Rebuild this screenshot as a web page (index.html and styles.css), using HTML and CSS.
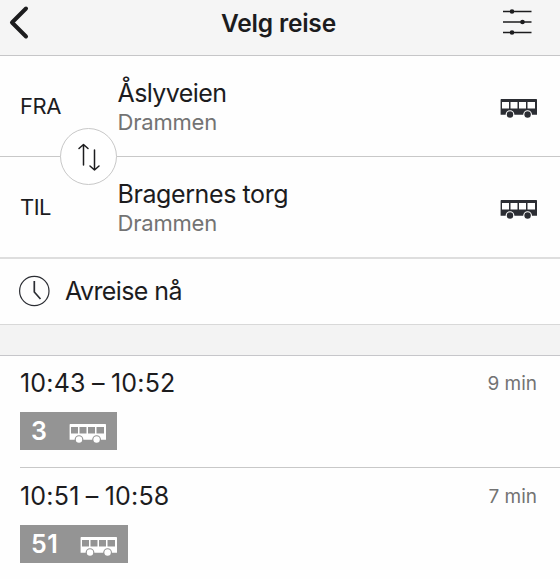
FILE: index.html
```html
<!DOCTYPE html>
<html lang="no">
<head>
    <meta charset="UTF-8">
    <meta name="viewport" content="width=device-width, initial-scale=1.0">
    <title>Velg reise</title>
    <link rel="stylesheet" href="styles.css">
</head>
<body>
    <svg class="sprite" width="0" height="0">
        <symbol id="bus" viewBox="0 0 37 20">
            <path fill="currentColor" fill-rule="evenodd" d="M1.300 0h35q.7 0 .7.8V15.700H32A4.400 4.400 0 0 0 23.200 15.700H14.400A4.400 4.400 0 0 0 5.600 15.700H.6V.8Q.6 0 1.300 0zM2 3v6.500h7V3zM10.500 3v6.500h7V3zM19 3v6.500h7V3zM27.500 3v6.500h7.500V3z"/>
            <circle fill="currentColor" cx="10" cy="15.500" r="3.200"/>
            <circle fill="currentColor" cx="27.600" cy="15.500" r="3.200"/>
        </symbol>
    </svg>

    <header class="topbar">
        <svg class="back" width="24" height="36" viewBox="0 0 24 36">
            <path d="M17 3.500L3 17.500L17 31.500" fill="none" stroke="#1c1c1e" stroke-width="4" stroke-linecap="round" stroke-linejoin="round"/>
        </svg>
        <h1>Velg reise</h1>
        <svg class="filter" width="30" height="28" viewBox="0 0 30 28" fill="#1c1c1e">
            <path d="M1 3.500h28.500M1 14h28.500M1 24.500h28.500" stroke="#1c1c1e" stroke-width="1.300"/>
            <circle cx="10" cy="3.500" r="2.300"/>
            <circle cx="20.500" cy="14" r="2.300"/>
            <circle cx="10" cy="24.500" r="2.300"/>
        </svg>
    </header>

    <section class="search">
        <div class="stop from">
            <span class="label">FRA</span>
            <div class="place">
                <div class="name">Åslyveien</div>
                <div class="city">Drammen</div>
            </div>
            <svg class="bus" width="37" height="20"><use href="#bus"/></svg>
        </div>
        <button class="swap">
            <svg width="24" height="30" viewBox="0 0 24 30" fill="none" stroke="#1c1c1e" stroke-width="1.500" stroke-linecap="round" stroke-linejoin="round">
                <path d="M6.500 23V2.500M2 6.500L6.500 2.500L11 6.500M17.500 8V28M13 24L17.500 28L22 24"/>
            </svg>
        </button>
        <div class="stop to">
            <span class="label">TIL</span>
            <div class="place">
                <div class="name">Bragernes torg</div>
                <div class="city">Drammen</div>
            </div>
            <svg class="bus" width="37" height="20"><use href="#bus"/></svg>
        </div>
    </section>

    <div class="departure">
        <svg width="32" height="32" viewBox="0 0 32 32" fill="none" stroke="#2b2d33">
            <circle cx="16.300" cy="16" r="14.700" stroke-width="1.200"/>
            <path d="M16.300 6V17L22.500 24" stroke-width="1.700"/>
        </svg>
        <span>Avreise nå</span>
    </div>

    <div class="spacer"></div>

    <main class="trips">
        <article class="trip">
            <div class="summary">
                <span class="time">10:43 – 10:52</span>
                <span class="duration">9 min</span>
            </div>
            <div class="line">
                <span>3</span>
                <svg class="bus" width="37" height="20"><use href="#bus"/></svg>
            </div>
        </article>
        <article class="trip">
            <div class="summary">
                <span class="time">10:51 – 10:58</span>
                <span class="duration">7 min</span>
            </div>
            <div class="line">
                <span>51</span>
                <svg class="bus" width="37" height="20"><use href="#bus"/></svg>
            </div>
        </article>
    </main>
</body>
</html>
```

FILE: styles.css
```css
* {
    box-sizing: border-box;
}
body {
    margin: 0;
    height: 579px;
    overflow: hidden;
    background: #fefefe;
    color: #1c1c1e;
    font-family: Inter, "Liberation Sans", sans-serif;
    font-size: 25px;
    line-height: 30px;
}
.sprite {
    display: block;
    height: 0;
}
.topbar {
    display: flex;
    align-items: flex-start;
    justify-content: space-between;
    height: 56px;
    padding: 5px 28px 0 9px;
    background: #f5f5f5;
    border-bottom: 1px solid #c6c6c8;
}
.topbar h1 {
    margin: 3px 0 0 22px;
    font-size: 24.5px;
    font-weight: 600;
    line-height: 30px;
    letter-spacing: -0.2px;
}
.filter {
    margin-top: 3px;
}
.search {
    position: relative;
}
.stop {
    display: flex;
    height: 101px;
    padding: 0 23px 0 20px;
    border-bottom: 1px solid #c8c8c8;
}
.to {
    height: 102px;
    border-bottom: 2px solid #dedede;
}
.label {
    width: 97.5px;
    padding-top: 35px;
    font-size: 22px;
    letter-spacing: -0.5px;
}
.place {
    flex: 1;
    padding-top: 22px;
}
.name {
    letter-spacing: -0.6px;
}
.to .name {
    letter-spacing: -0.4px;
}
.city {
    font-size: 22px;
    line-height: 28px;
    letter-spacing: -0.2px;
    color: #737373;
}
.stop .bus {
    margin-top: 43px;
    color: #2b2d33;
}
.swap {
    position: absolute;
    top: 72px;
    left: 60px;
    display: flex;
    align-items: center;
    justify-content: center;
    width: 57px;
    height: 57px;
    padding: 0;
    background: #fff;
    border: 1px solid #c8c8c8;
    border-radius: 50%;
}
.departure {
    display: flex;
    align-items: center;
    gap: 15px;
    height: 65px;
    padding: 0 0 1px 18px;
    letter-spacing: -0.6px;
}
.spacer {
    height: 32px;
    background: #f3f3f3;
    border-top: 1px solid #d8d8d8;
    border-bottom: 1px solid #c6c6ca;
}
.trips {
    padding-left: 20px;
}
.trip {
    height: 112px;
    padding-top: 12px;
    border-bottom: 1px solid #c8c8c8;
}
.trip:last-child {
    padding-top: 13px;
    border-bottom: none;
}
.summary {
    display: flex;
    justify-content: space-between;
    padding-right: 23px;
}
.time {
    letter-spacing: 0.2px;
    word-spacing: -1px;
}
.duration {
    padding-top: 1px;
    font-size: 19px;
    line-height: 29px;
    color: #737373;
}
.line {
    display: inline-flex;
    gap: 22px;
    height: 38px;
    margin-top: 14px;
    padding: 4px 11px 0 11px;
    background: #949494;
    color: #fff;
    font-weight: 600;
    letter-spacing: 0.5px;
}
.line .bus {
    margin-top: 8px;
}
```
